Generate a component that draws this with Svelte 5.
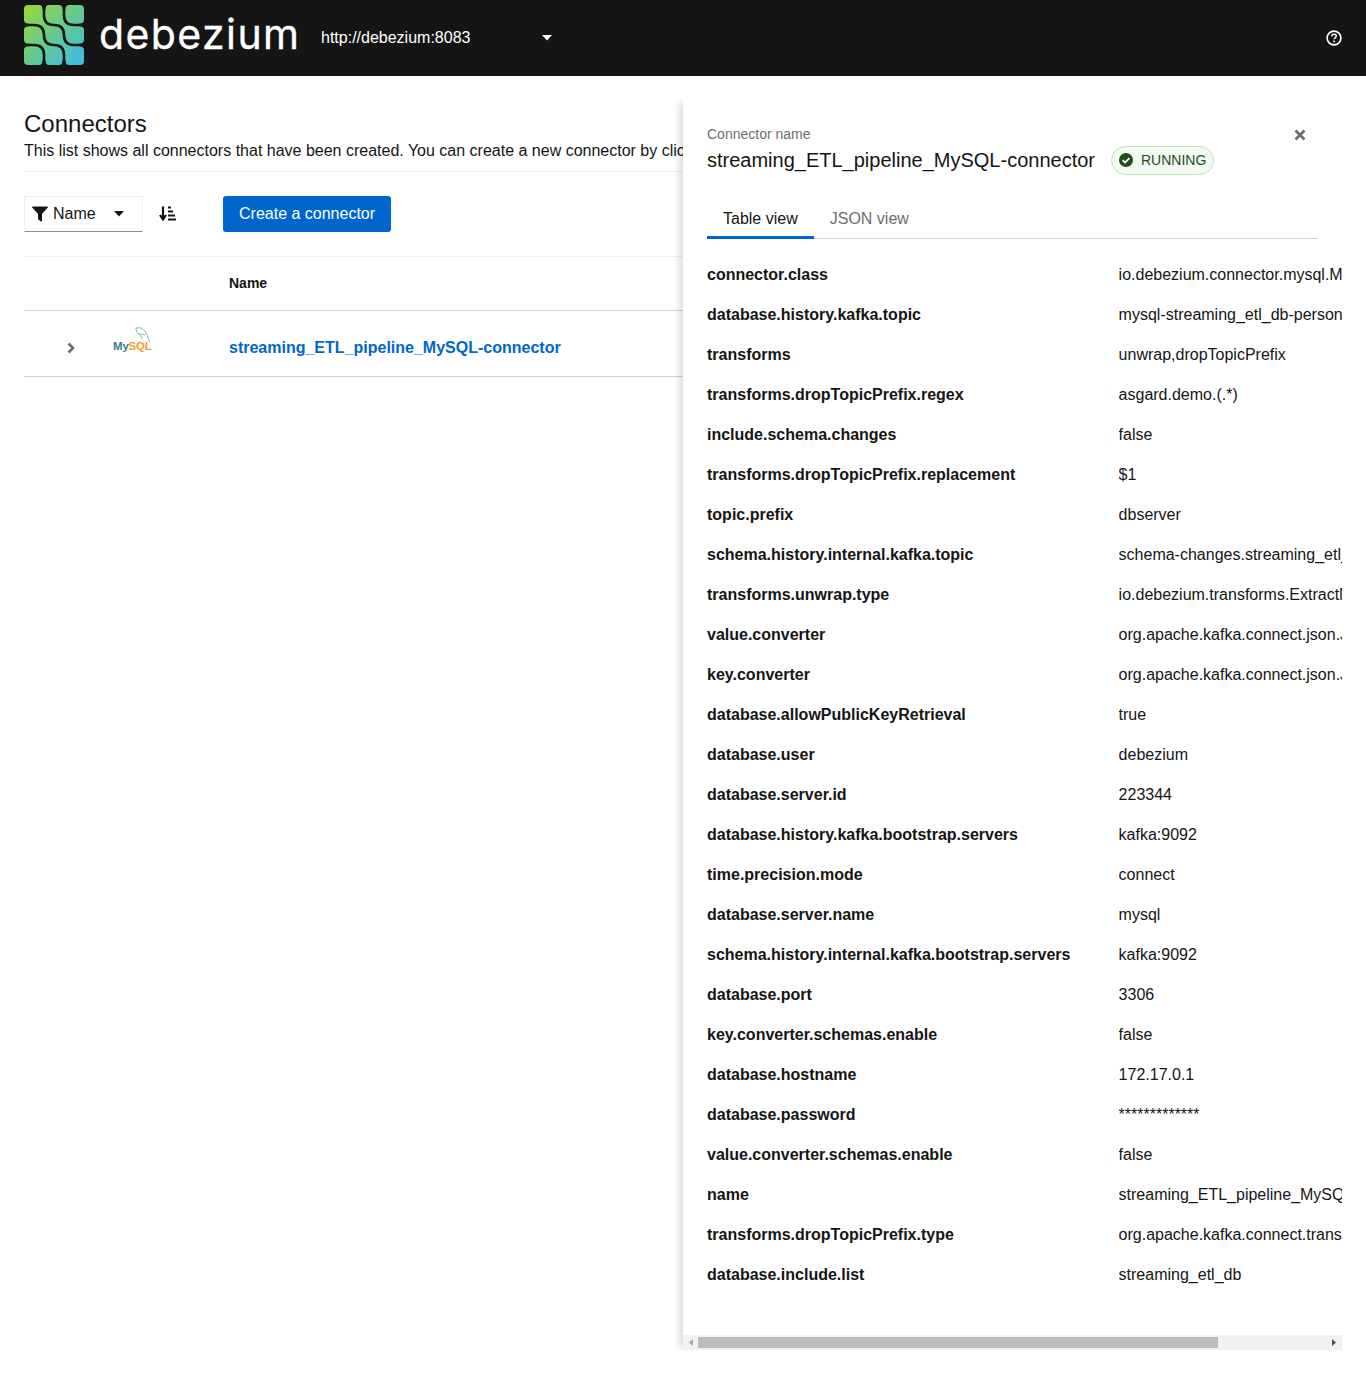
<script>
  const config = [
    ["connector.class", "io.debezium.connector.mysql.MySqlConnector"],
    ["database.history.kafka.topic", "mysql-streaming_etl_db-person"],
    ["transforms", "unwrap,dropTopicPrefix"],
    ["transforms.dropTopicPrefix.regex", "asgard.demo.(.*)"],
    ["include.schema.changes", "false"],
    ["transforms.dropTopicPrefix.replacement", "$1"],
    ["topic.prefix", "dbserver"],
    ["schema.history.internal.kafka.topic", "schema-changes.streaming_etl_db"],
    ["transforms.unwrap.type", "io.debezium.transforms.ExtractNewRecordState"],
    ["value.converter", "org.apache.kafka.connect.json.JsonConverter"],
    ["key.converter", "org.apache.kafka.connect.json.JsonConverter"],
    ["database.allowPublicKeyRetrieval", "true"],
    ["database.user", "debezium"],
    ["database.server.id", "223344"],
    ["database.history.kafka.bootstrap.servers", "kafka:9092"],
    ["time.precision.mode", "connect"],
    ["database.server.name", "mysql"],
    ["schema.history.internal.kafka.bootstrap.servers", "kafka:9092"],
    ["database.port", "3306"],
    ["key.converter.schemas.enable", "false"],
    ["database.hostname", "172.17.0.1"],
    ["database.password", "*************"],
    ["value.converter.schemas.enable", "false"],
    ["name", "streaming_ETL_pipeline_MySQL-connector"],
    ["transforms.dropTopicPrefix.type", "org.apache.kafka.connect.transforms.RegexRouter"],
    ["database.include.list", "streaming_etl_db"]
  ];

  // flared notches where the logo's gaps meet its outer edge
  const notches = [
    "M15 0H25Q21.300 0 21.300 5H18.700Q18.700 0 15 0Z",
    "M35 0H45Q41.300 0 41.300 5H38.700Q38.700 0 35 0Z",
    "M15 60H25Q21.300 60 21.300 55H18.700Q18.700 60 15 60Z",
    "M35 60H45Q41.300 60 41.300 55H38.700Q38.700 60 35 60Z",
    "M0 15V25Q0 21.300 5 21.300V18.700Q0 18.700 0 15Z",
    "M0 35V45Q0 41.300 5 41.300V38.700Q0 38.700 0 35Z",
    "M60 15V25Q60 21.300 55 21.300V18.700Q60 18.700 60 15Z",
    "M60 35V45Q60 41.300 55 41.300V38.700Q60 38.700 60 35Z"
  ];
</script>

<div class="page">
  <header class="topbar">
    <svg class="logo" viewBox="0 0 60 60" width="60" height="60">
      <defs>
        <linearGradient id="logoFill" x1="0" y1="0" x2="1" y2="1">
          <stop offset="0" stop-color="#9bd933" />
          <stop offset="0.5" stop-color="#63c98f" />
          <stop offset="1" stop-color="#3ebbec" />
        </linearGradient>
      </defs>
      <rect width="60" height="60" rx="4" fill="url(#logoFill)" />
      <g fill="none" stroke="#151515" stroke-width="2.600">
        <path d="M40 -2V10Q40 20 50 20H62" />
        <path d="M20 -2V10Q20 20 30 20Q40 20 40 30Q40 40 50 40H62" />
        <path d="M-2 20H10Q20 20 20 30Q20 40 30 40Q40 40 40 50V62" />
        <path d="M-2 40H10Q20 40 20 50V62" />
      </g>
      {#each notches as d}
        <path {d} fill="#151515" />
      {/each}
    </svg>
    <span class="wordmark">debezium</span>
    <div class="cluster">
      <span>http://debezium:8083</span>
      <svg class="caret" viewBox="0 0 10 6" width="10" height="6"><path d="M0 0h10L5 5.500z" fill="#fff" /></svg>
    </div>
    <svg class="help" viewBox="0 0 16 16" width="16" height="16">
      <circle cx="8" cy="8" r="6.900" fill="none" stroke="#fff" stroke-width="1.600" />
      <path d="M5.700 6.300C5.800 4.900 6.800 4.200 8 4.200c1.300 0 2.300.8 2.300 1.900 0 1-.6 1.400-1.200 1.800-.6.4-.9.7-.9 1.400" fill="none" stroke="#fff" stroke-width="1.500" />
      <rect x="7.200" y="10.600" width="1.700" height="1.700" fill="#fff" />
    </svg>
  </header>

  <main class="content">
    <h1>Connectors</h1>
    <p class="intro">This list shows all connectors that have been created. You can create a new connector by clicking on the button below.</p>

    <div class="toolbar">
      <div class="filter">
        <svg viewBox="0 0 16 16" width="16" height="16"><path d="M0.600 0.500h14.800c.5 0 .8.6.4 1L10 8v7c0 .5-.5.7-.9.4l-2.800-2a.6.6 0 0 1-.3-.5V8L.2 1.500c-.4-.4-.1-1 .4-1z" fill="#151515" /></svg>
        <span>Name</span>
        <svg class="filter-caret" viewBox="0 0 10 6" width="10" height="6"><path d="M0 0h10L5 5.500z" fill="#151515" /></svg>
      </div>
      <svg class="sort" viewBox="0 0 18 16" width="18" height="16">
        <path d="M4 0.500v11M1 9l3 4.500L7 9" fill="none" stroke="#151515" stroke-width="2.200" />
        <path d="M9 1.500h3M9 5.500h5M9 9.500h7M9 13.500h8" fill="none" stroke="#151515" stroke-width="1.900" />
      </svg>
      <button class="create">Create a connector</button>
    </div>

    <div class="table-head">
      <span class="name-col">Name</span>
    </div>
    <div class="table-row">
      <svg class="chevron" viewBox="0 0 8 12" width="8" height="12"><path d="M1.500 1.500L6 6l-4.500 4.500" fill="none" stroke="#6a6e73" stroke-width="2.600" /></svg>
      <div class="mysql">
        <svg class="dolphin" viewBox="0 0 16 18" width="16" height="18">
          <path d="M1 1C6 0 9 2 11 6s2 6 4 9M1 1c0 3 1 5 3 6s2 3 3 5M4 7c2 0 4 0 6 1" fill="none" stroke="#6fa9b6" stroke-width="0.900" />
        </svg>
        <span class="my">My</span><span class="sql">SQL</span>
      </div>
      <a class="name-col link" href="#top">streaming_ETL_pipeline_MySQL-connector</a>
    </div>
  </main>

  <aside class="drawer">
    <div class="drawer-head">
      <div class="caption">Connector name</div>
      <div class="title-line">
        <span class="title">streaming_ETL_pipeline_MySQL-connector</span>
        <span class="badge">
          <svg viewBox="0 0 16 16" width="14" height="14">
            <circle cx="8" cy="8" r="8" fill="#1e4f18" />
            <path d="M4.200 8.200l2.700 2.700 5-5" fill="none" stroke="#fff" stroke-width="2" />
          </svg>
          RUNNING
        </span>
      </div>
      <svg class="close" viewBox="0 0 12 12" width="12" height="12">
        <path d="M1.500 1.500l9 9M10.500 1.500l-9 9" stroke="#6a6e73" stroke-width="2.800" />
      </svg>
    </div>

    <div class="tabs">
      <span class="tab active">Table view</span>
      <span class="tab">JSON view</span>
    </div>

    <div class="rows">
      {#each config as [key, value]}
        <div class="row">
          <span class="key">{key}</span>
          <span class="value">{value}</span>
        </div>
      {/each}
    </div>

    <div class="scrollbar">
      <svg viewBox="0 0 4 7" width="4" height="7"><path d="M4 0v7L0 3.500z" fill="#a3a3a3" /></svg>
      <div class="track"><div class="thumb"></div></div>
      <svg viewBox="0 0 4 7" width="4" height="7"><path d="M0 0v7l4-3.500z" fill="#505050" /></svg>
    </div>
  </aside>
</div>

<style>
  :global(body) {
    margin: 0;
    background: #fff;
    color: #151515;
    font-family: "Liberation Sans", Arial, sans-serif;
    font-size: 16px;
  }

  .page {
    position: relative;
    height: 1374px;
    overflow: hidden;
  }

  .topbar {
    height: 76px;
    background: #151515;
    display: flex;
    align-items: center;
    padding: 0 24px;
    box-sizing: border-box;
  }

  .logo {
    flex: none;
    margin-top: -6px;
  }

  .wordmark {
    margin-left: 15px;
    width: 222px;
    color: #fff;
    font-family: Inter, sans-serif;
    font-size: 41px;
    letter-spacing: 1.400px;
    line-height: 1;
    margin-top: -8px;
    -webkit-text-stroke: 0.300px #fff;
  }

  .cluster {
    display: flex;
    align-items: center;
    justify-content: space-between;
    width: 231px;
    color: #fff;
  }

  .help {
    margin-left: auto;
  }

  .content {
    padding: 34px 0 0 24px;
    width: 1318px;
    box-sizing: border-box;
  }

  h1 {
    margin: 0;
    font-size: 24px;
    font-weight: 400;
    line-height: 28px;
  }

  .intro {
    margin: 0;
    padding: 1px 0 8px;
    line-height: 24px;
    white-space: nowrap;
    border-bottom: 1px solid #f0f0f0;
  }

  .toolbar {
    display: flex;
    align-items: center;
    margin-top: 24px;
    height: 36px;
  }

  .filter {
    width: 119px;
    height: 36px;
    box-sizing: border-box;
    display: flex;
    align-items: center;
    padding-left: 7px;
    border: 1px solid #f0f0f0;
    border-bottom-color: #8a8d90;
  }

  .filter span {
    margin-left: 5px;
  }

  .filter-caret {
    margin-left: 18px;
  }

  .sort {
    margin-left: 16px;
  }

  .create {
    margin-left: 46px;
    height: 36px;
    padding: 0 16px;
    border: 0;
    border-radius: 3px;
    background: #06c;
    color: #fff;
    font: inherit;
  }

  .table-head {
    margin-top: 24px;
    height: 53px;
    display: flex;
    align-items: center;
    border-top: 1px solid #f0f0f0;
    border-bottom: 1px solid #d2d2d2;
  }

  .table-head .name-col {
    margin: 0 0 2px 205px;
    font-size: 14px;
    font-weight: 700;
  }

  .table-row {
    height: 57px;
    padding-top: 8px;
    display: flex;
    align-items: center;
    border-bottom: 1px solid #d2d2d2;
  }

  .chevron {
    margin-left: 43px;
  }

  .mysql {
    position: relative;
    width: 116px;
    margin-left: 38px;
    font-size: 11.500px;
    font-weight: 700;
    letter-spacing: -0.200px;
    margin-top: -3px;
  }

  .my {
    color: #2d7f93;
  }

  .sql {
    color: #f0a030;
  }

  .dolphin {
    position: absolute;
    left: 22px;
    top: -13px;
  }

  .link {
    color: #06c;
    font-weight: 700;
    text-decoration: none;
  }

  .drawer {
    position: absolute;
    left: 683px;
    top: 100px;
    width: 659px;
    height: 1250px;
    background: #fff;
    box-shadow: -5px 0 8px -2px rgba(3, 3, 3, 0.16);
    clip-path: inset(0 0 0 -16px);
    display: flex;
    flex-direction: column;
  }

  .drawer-head {
    position: relative;
    padding: 24px 24px 0;
  }

  .caption {
    font-size: 14px;
    line-height: 21px;
    color: #6a6e73;
  }

  .title-line {
    display: flex;
    align-items: center;
    gap: 16px;
    height: 30px;
  }

  .title {
    font-size: 20px;
    line-height: 30px;
  }

  .badge {
    display: flex;
    align-items: center;
    gap: 8px;
    height: 29px;
    box-sizing: border-box;
    padding: 0 7px;
    border: 1px solid #bde5b8;
    border-radius: 15px;
    background: #f3faf2;
    color: #1e4f18;
    font-size: 14px;
  }

  .close {
    position: absolute;
    left: 611px;
    top: 29px;
  }

  .tabs {
    display: flex;
    margin: 25px 24px 0;
    width: 611px;
    border-bottom: 1px solid #d2d2d2;
  }

  .tab {
    padding: 0 16px;
    height: 38px;
    line-height: 38px;
    color: #6a6e73;
  }

  .tab.active {
    color: #151515;
    box-shadow: inset 0 -2px 0 #06c, 0 1px 0 #06c;
  }

  .rows {
    flex: 1;
    padding: 16px 0 0 24px;
    overflow: hidden;
  }

  .row {
    display: grid;
    grid-template-columns: 411.600px 1fr;
    height: 40px;
    align-items: center;
    white-space: nowrap;
  }

  .key {
    font-weight: 700;
  }

  .value {
    overflow: hidden;
  }

  .scrollbar {
    height: 15px;
    background: #f1f1f1;
    display: flex;
    align-items: center;
    padding: 0 6px;
    gap: 5px;
  }

  .track {
    flex: 1;
    height: 11px;
  }

  .thumb {
    width: 520px;
    height: 100%;
    background: #bdbdbd;
  }
</style>
